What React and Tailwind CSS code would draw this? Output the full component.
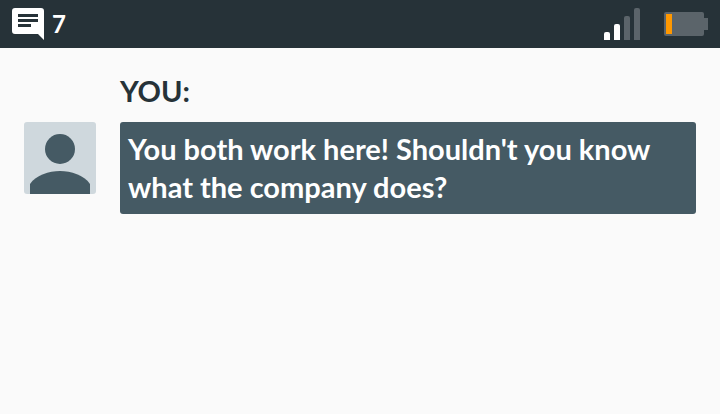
function MessageIcon() {
  return (
    <svg className="h-8 w-8" viewBox="0 0 32 32" aria-hidden="true">
      <path fill="#fff" d="M3 0h26a3 3 0 0 1 3 3v29l-6-6H3a3 3 0 0 1-3-3V3a3 3 0 0 1 3-3z" />
      <path fill="#263238" d="M6 6h20v3H6zM6 11h20v3H6zM6 16h13v3H6z" />
    </svg>
  );
}

function Signal() {
  return (
    <div className="flex h-8 items-end gap-1" role="img" aria-label="Signal strength">
      <span className="h-2 w-1.5 rounded-t-xs bg-white" />
      <span className="h-4 w-1.5 rounded-t-xs bg-white" />
      <span className="h-6 w-1.5 rounded-t-xs bg-[#5b646a]" />
      <span className="h-8 w-1.5 rounded-t-xs bg-[#5b646a]" />
    </div>
  );
}

function Battery() {
  return (
    <div className="flex items-center" role="img" aria-label="Battery low">
      <div className="h-6 w-10 rounded-xs bg-[#5b646a] p-0.5">
        <div className="h-5 w-1.5 bg-[#ff9800]" />
      </div>
      <div className="h-3 w-1 bg-[#5b646a]" />
    </div>
  );
}

function Avatar() {
  return (
    <svg className="h-18 w-18 shrink-0 rounded-[3px] bg-[#cfd8dd]" viewBox="0 0 72 72" aria-hidden="true">
      <circle cx="36" cy="27" r="15" fill="#455a64" />
      <path fill="#455a64" d="M6 72V62C12 53 25 49 36 49s24 4 30 13v10z" />
    </svg>
  );
}

export default function App() {
  return (
    <div className="min-h-screen bg-[#fafafa] font-['Lato',sans-serif] font-bold">
      <header className="flex h-12 items-center justify-between bg-[#263238] px-3">
        <div className="flex items-center gap-2 text-2xl text-white">
          <MessageIcon />
          <span>7</span>
        </div>
        <div className="flex items-center gap-6">
          <Signal />
          <Battery />
        </div>
      </header>
      <main className="grid grid-cols-[72px_1fr] gap-x-6 px-6 pt-6">
        <h2 className="col-start-2 pb-3 text-[29px] leading-[38px] text-[#263238]">YOU:</h2>
        <Avatar />
        <p className="rounded-[3px] bg-[#455a64] p-2 text-[29px] leading-[38px] text-white">
          You both work here! Shouldn't you know what the company does?
        </p>
      </main>
    </div>
  );
}
